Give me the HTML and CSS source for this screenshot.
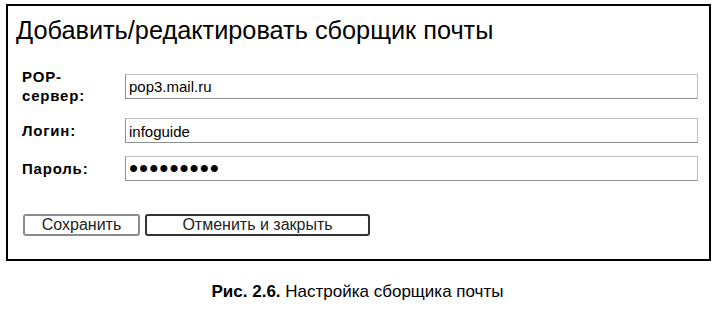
FILE: index.html
```html
<!DOCTYPE html>
<html lang="ru">
<head>
  <meta charset="UTF-8" />
  <title>Сборщик почты</title>
  <link rel="stylesheet" href="styles.css">
</head>
<body>

<div class="frame">
  <h2>Добавить/редактировать сборщик почты</h2>
  <form class="collector-form">
    <div class="row">
      <label for="server">POP-<br>сервер:</label>
      <input type="text" id="server" value="pop3.mail.ru" />
    </div>
    <div class="row">
      <label for="login">Логин:</label>
      <input type="text" id="login" value="infoguide" />
    </div>
    <div class="row">
      <label for="pass">Пароль:</label>
      <input type="password" id="pass" value="123456789" />
    </div>
    <div class="buttons">
      <button type="button" class="btn-save">Сохранить</button>
      <button type="button" class="btn-cancel">Отменить и закрыть</button>
    </div>
  </form>
</div>

<p class="caption"><b>Рис. 2.6.</b> Настройка сборщика почты</p>

</body>
</html>
```

FILE: styles.css
```css
* {
  box-sizing: border-box;
  margin: 0;
  padding: 0;
  font-family: "Liberation Sans", Arial, sans-serif;
}

body {
  background: #fff;
  color: #000;
  width: 715px;
  height: 310px;
  overflow: hidden;
}

.frame {
  margin: 4px 0 0 6px;
  width: 705px;
  height: 257px;
  border: 2px solid #000;
  padding: 10px 11px 0 8px;
}

h2 {
  font-weight: normal;
  font-size: 25.3px;
  line-height: 28px;
  margin-bottom: 23px;
}

.collector-form {
  display: flex;
  flex-direction: column;
}

.row {
  display: flex;
  align-items: center;
  margin-bottom: 13px;
}

.row label {
  width: 109px;
  flex-shrink: 0;
  padding-left: 6px;
  font-weight: bold;
  font-size: 15px;
  line-height: 19px;
  letter-spacing: 0.8px;
}

.row input {
  flex: 1;
  height: 25px;
  border: 1px solid #8e8e8e;
  border-top-color: #c0c0c0;
  border-right-color: #c0c0c0;
  padding: 1px 3px 0;
  font-size: 15px;
  color: #000;
  outline: none;
}

.row input[type="password"] {
  font-size: 26px;
  line-height: 20px;
  letter-spacing: 1px;
  padding-top: 0;
}

.buttons {
  display: flex;
  gap: 5px;
  margin-top: 20px;
  padding-left: 7px;
}

.buttons button {
  height: 22px;
  background: #fff;
  border: 2px solid #8c8c8c;
  border-radius: 3px;
  font-size: 16px;
  line-height: 16px;
  color: #222;
}

.btn-save {
  width: 117px;
}

.btn-cancel {
  width: 225px;
  border-color: #333 !important;
}

.caption {
  text-align: center;
  font-size: 17px;
  margin-top: 21px;
}
```
